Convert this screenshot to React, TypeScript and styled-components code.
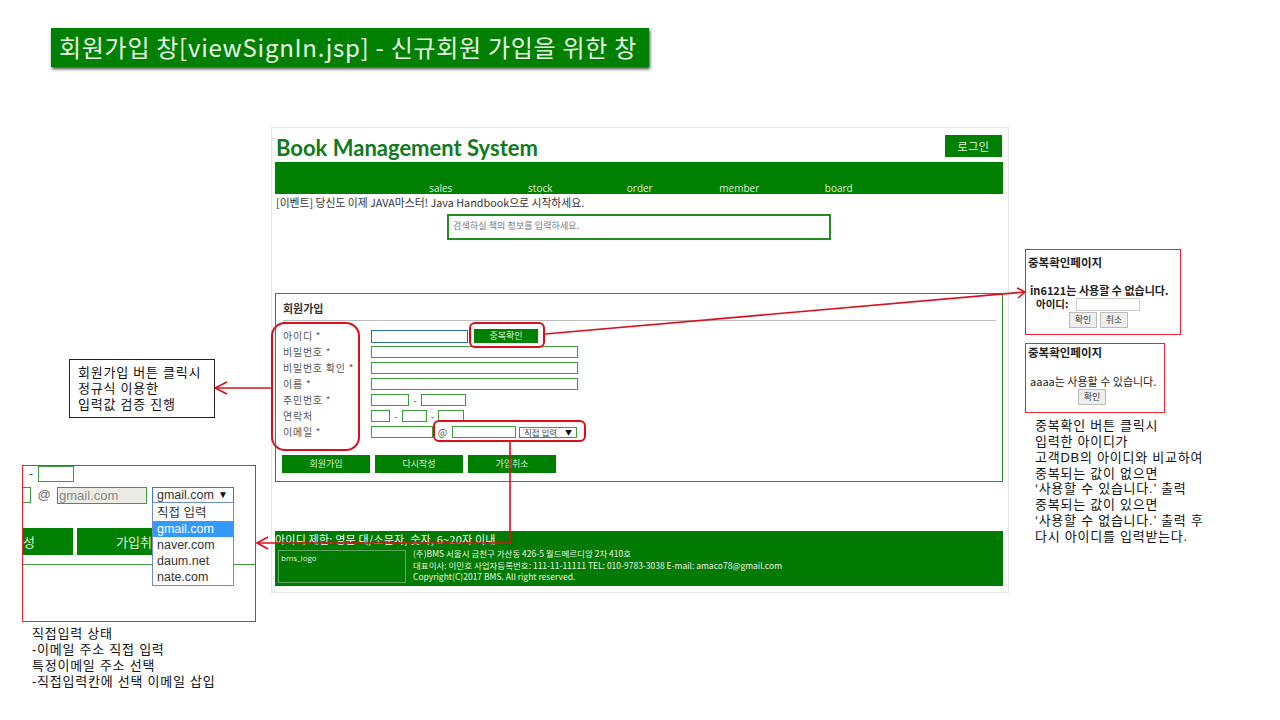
import styled, { createGlobalStyle } from "styled-components";

const KR = `"Noto Sans CJK KR", sans-serif`;
const SANS = `"Liberation Sans", "Noto Sans CJK KR", sans-serif`;
const OPEN = `"Open Sans", "Noto Sans CJK KR", sans-serif`;
const GREEN = "#008000";
const RED = "#d9101c";
const THIN_RED = "#ee2233";

const navItems = ["sales", "stock", "order", "member", "board"];
const labels = ["아이디 *", "비밀번호 *", "비밀번호 확인 *", "이름 *", "주민번호 *", "연락처", "이메일 *"];
const mailOptions = ["직접 입력", "gmail.com", "naver.com", "daum.net", "nate.com"];

function Arrow({ x, y, dx, dy }: { x: number; y: number; dx: number; dy: number }) {
  return <polyline points={`${x + dx},${y - dy} ${x},${y} ${x + dx},${y + dy}`} />;
}

export default function App() {
  return (
    <Slide>
      <Global />
      <Banner>회원가입 창[viewSignIn.jsp] - 신규회원 가입을 위한 창</Banner>

      <PageFrame>
        <Header>
          <Logo>Book Management System</Logo>
          <LoginButton>로그인</LoginButton>
        </Header>
        <Nav>
          {navItems.map((item) => (
            <NavItem key={item}>{item}</NavItem>
          ))}
        </Nav>
        <EventLine>[이벤트] 당신도 이제 JAVA마스터! Java Handbook으로 시작하세요.</EventLine>
        <SearchBox>검색하실 책의 정보를 입력하세요.</SearchBox>

        <FormPanel>
          <FormTitle>회원가입</FormTitle>
          <FormGrid>
            <Labels>
              {labels.map((label) => (
                <Label key={label}>{label}</Label>
              ))}
            </Labels>
            <Fields>
              <FieldRow>
                <Field $w={97} $focus />
                <CheckButton>중복확인</CheckButton>
              </FieldRow>
              <FieldRow>
                <Field $w={207} />
              </FieldRow>
              <FieldRow>
                <Field $w={207} />
              </FieldRow>
              <FieldRow>
                <Field $w={207} />
              </FieldRow>
              <FieldRow>
                <Field $w={38} />
                <Dash $w={12}>-</Dash>
                <Field $w={45} />
              </FieldRow>
              <FieldRow>
                <Field $w={19} />
                <Dash $w={12}>-</Dash>
                <Field $w={25} />
                <Dash $w={11}>-</Dash>
                <Field $w={26} />
              </FieldRow>
              <FieldRow>
                <Field $w={62} />
                <At>@</At>
                <Field $w={64} />
                <MiniSelect>
                  직접 입력<small>▼</small>
                </MiniSelect>
              </FieldRow>
            </Fields>
          </FormGrid>
          <ButtonRow>
            <FormButton>회원가입</FormButton>
            <FormButton>다시작성</FormButton>
            <FormButton>가입취소</FormButton>
          </ButtonRow>
        </FormPanel>

        <Footer>
          <FooterLogo>bms_logo</FooterLogo>
          <FooterText>
            <FooterLine>(주)BMS 서울시 금천구 가산동 426-5 월드메르디앙 2차 410호</FooterLine>
            <FooterLine>
              대표이사: 이민호 사업자등록번호: 111-11-11111 TEL: 010-9783-3038 E-mail: amaco78@gmail.com
            </FooterLine>
            <FooterLine>Copyright(C)2017 BMS. All right reserved.</FooterLine>
          </FooterText>
        </Footer>
      </PageFrame>

      <FooterNote>아이디 제한: 영문 대/소문자, 숫자, 6~20자 이내</FooterNote>

      <Callout $x={271} $y={322} $w={89} $h={129} $r={14} />
      <Callout $x={469} $y={322} $w={76} $h={26} $r={6} />
      <Callout $x={433} $y={420} $w={153} $h={22} $r={6} />

      <Wires viewBox="0 0 1280 720">
        <line x1="545" y1="334" x2="1025" y2="292" />
        <line x1="271" y1="388" x2="215" y2="388" />
        <polyline points="510,442 510,543 257,543" />
        <Arrow x={215} y={388} dx={12} dy={6} />
        <Arrow x={257} y={543} dx={11} dy={6} />
        <polyline points="1017,288 1025,292 1018,298" />
      </Wires>

      <RuleBox>
        회원가입 버튼 클릭시
        <br />
        정규식 이용한
        <br />
        입력값 검증 진행
      </RuleBox>

      <CropBox>
        <CropTop>
          <span>-</span>
          <CropInput $w={36} />
        </CropTop>
        <CropMail>
          <CropInput $w={10} />
          <CropAt>@</CropAt>
          <CropMailInput>gmail.com</CropMailInput>
          <CropSelect>
            gmail.com<small>▼</small>
          </CropSelect>
        </CropMail>
        <CropButtons>
          <CropButton $w={50} $align="left">
            성
          </CropButton>
          <CropButton $w={126} $align="center">
            가입취소
          </CropButton>
        </CropButtons>
        <CropRule />
        <Dropdown>
          {mailOptions.map((option, i) => (
            <DropdownItem key={option} $active={i === 1}>
              {option}
            </DropdownItem>
          ))}
        </Dropdown>
      </CropBox>

      <Note $x={32} $y={626}>
        직접입력 상태
        <br />
        -이메일 주소 직접 입력
        <br />
        특정이메일 주소 선택
        <br />
        -직접입력칸에 선택 이메일 삽입
      </Note>

      <PopupBox $x={1025} $y={249} $w={156} $h={86} $top={4}>
        <PopupTitle>중복확인페이지</PopupTitle>
        <PopupMessage $bold>in6121는 사용할 수 없습니다.</PopupMessage>
        <PopupIdRow>
          아이디:
          <PopupInput />
        </PopupIdRow>
        <PopupButtons $pad={43}>
          <PopupButton>확인</PopupButton>
          <PopupButton>취소</PopupButton>
        </PopupButtons>
      </PopupBox>

      <PopupBox $x={1025} $y={343} $w={140} $h={70} $top={0}>
        <PopupTitle>중복확인페이지</PopupTitle>
        <PopupMessage>aaaa는 사용할 수 있습니다.</PopupMessage>
        <PopupButtons $pad={52}>
          <PopupButton>확인</PopupButton>
        </PopupButtons>
      </PopupBox>

      <Note $x={1035} $y={418}>
        중복확인 버튼 클릭시
        <br />
        입력한 아이디가
        <br />
        고객DB의 아이디와 비교하여
        <br />
        중복되는 값이 없으면
        <br />
        ‘사용할 수 있습니다.’ 출력
        <br />
        중복되는 값이 있으면
        <br />
        ‘사용할 수 없습니다.’ 출력 후
        <br />
        다시 아이디를 입력받는다.
      </Note>
    </Slide>
  );
}

const Global = createGlobalStyle`
  html, body {
    margin: 0;
    background: #fff;
  }
`;

const Slide = styled.div`
  position: relative;
  width: 1280px;
  height: 720px;
  overflow: hidden;
  background: #fff;
  font-family: ${SANS};
`;

const Banner = styled.div`
  position: absolute;
  left: 51px;
  top: 28px;
  width: 598px;
  height: 39px;
  box-sizing: border-box;
  padding-left: 8px;
  background: ${GREEN};
  box-shadow: 1px 2px 3px #444;
  color: #eaf7e6;
  font: 400 24px/38px ${KR};
  letter-spacing: 0.72px;
  white-space: nowrap;
`;

const PageFrame = styled.div`
  position: absolute;
  left: 271px;
  top: 127px;
  width: 738px;
  height: 466px;
  box-sizing: border-box;
  display: flex;
  flex-direction: column;
  padding: 0 5px 0 3px;
  border: 1px solid #e6e6e6;
  font-family: ${OPEN};
`;

const Header = styled.header`
  display: flex;
  justify-content: space-between;
  align-items: flex-start;
  height: 34px;
`;

const Logo = styled.h1`
  margin: 5px 0 0 1px;
  color: #0f7a1e;
  font: 700 22px/30px Lato, ${OPEN};
`;

const LoginButton = styled.div`
  width: 57px;
  height: 22px;
  margin: 7px 1px 0 0;
  background: ${GREEN};
  color: #e8f5e4;
  font: 400 11px/22px ${KR};
  letter-spacing: 0.6px;
  text-align: center;
`;

const Nav = styled.nav`
  display: flex;
  align-items: flex-end;
  height: 32px;
  padding-left: 116px;
  background: ${GREEN};
`;

const NavItem = styled.span`
  width: 99.5px;
  color: #dff0da;
  font: 400 10px/11px ${OPEN};
  text-align: center;
`;

const EventLine = styled.div`
  height: 20px;
  padding-left: 1px;
  color: #333;
  font: 400 10.8px/17px ${KR};
  white-space: nowrap;
`;

const SearchBox = styled.div`
  align-self: center;
  width: 384px;
  height: 26px;
  box-sizing: border-box;
  padding-left: 4px;
  border: 2px solid #228b22;
  color: #777;
  font: 400 9px/20px ${KR};
  letter-spacing: 0.1px;
`;

const FormPanel = styled.section`
  height: 189px;
  box-sizing: border-box;
  margin-top: 53px;
  padding: 0 6px 0 7px;
  border: 1px solid #2e8b2e;
`;

const FormTitle = styled.h2`
  height: 27px;
  box-sizing: border-box;
  margin: 0;
  border-bottom: 1px solid #bbb;
  color: #333;
  font: 700 11px/29px ${KR};
`;

const FormGrid = styled.div`
  display: flex;
  padding-top: 7px;
`;

const Labels = styled.div`
  width: 88px;
`;

const Label = styled.div`
  height: 16px;
  color: #555;
  font: 400 10px/16px ${KR};
  letter-spacing: 0.75px;
  white-space: nowrap;
`;

const Fields = styled.div`
  display: flex;
  flex-direction: column;
`;

const FieldRow = styled.div`
  display: flex;
  align-items: center;
  height: 16px;
`;

const Field = styled.div<{ $w: number; $focus?: boolean }>`
  width: ${(p) => p.$w}px;
  height: ${(p) => (p.$focus ? 13 : 12)}px;
  box-sizing: border-box;
  border: 1px solid ${(p) => (p.$focus ? "#2a6f9e" : "#3f9a3f")};
`;

const CheckButton = styled.div`
  width: 64px;
  height: 14px;
  margin-left: 6px;
  background: ${GREEN};
  color: #dff0da;
  font: 400 9px/14px ${KR};
  text-align: center;
`;

const Dash = styled.span<{ $w: number }>`
  width: ${(p) => p.$w}px;
  color: #555;
  font: 400 10px/12px ${KR};
  text-align: center;
`;

const At = styled.span`
  width: 19px;
  color: #555;
  font: 400 10px/12px ${KR};
  text-align: center;
`;

const MiniSelect = styled.div`
  display: flex;
  justify-content: space-between;
  align-items: center;
  width: 58px;
  height: 11px;
  box-sizing: border-box;
  margin-left: 3px;
  padding: 0 4px;
  border: 1px solid #3f9a3f;
  color: #444;
  font: 400 8.5px/9px ${KR};
  small {
    font-size: 7px;
    color: #111;
  }
`;

const ButtonRow = styled.div`
  display: flex;
  gap: 5px;
  margin: 15px 0 0 -1px;
`;

const FormButton = styled.div`
  width: 88px;
  height: 18px;
  background: ${GREEN};
  color: #dff0da;
  font: 400 9px/18px ${KR};
  text-align: center;
`;

const Footer = styled.footer`
  display: flex;
  gap: 7px;
  height: 55px;
  box-sizing: border-box;
  margin-top: 49px;
  padding: 17px 0 0 3px;
  background: #007a00;
`;

const FooterLogo = styled.div`
  width: 128px;
  height: 33px;
  margin-top: 2px;
  box-sizing: border-box;
  padding: 2px;
  border: 1px solid #5da95d;
  color: #e2f1df;
  font: 400 8px/10px ${OPEN};
`;

const FooterText = styled.div`
  display: flex;
  flex-direction: column;
`;

const FooterLine = styled.div`
  height: 11.5px;
  color: #eaf6e7;
  font: 400 8.5px/11.5px ${KR};
  white-space: nowrap;
`;

const FooterNote = styled.div`
  position: absolute;
  left: 275px;
  top: 532px;
  color: #f4faf2;
  font: 400 11px/14px ${KR};
  letter-spacing: 0.2px;
  white-space: nowrap;
`;

const Callout = styled.div<{ $x: number; $y: number; $w: number; $h: number; $r: number }>`
  position: absolute;
  left: ${(p) => p.$x}px;
  top: ${(p) => p.$y}px;
  width: ${(p) => p.$w}px;
  height: ${(p) => p.$h}px;
  box-sizing: border-box;
  border: 2px solid ${RED};
  border-radius: ${(p) => p.$r}px;
`;

const Wires = styled.svg`
  position: absolute;
  inset: 0;
  width: 1280px;
  height: 720px;
  pointer-events: none;
  fill: none;
  stroke: ${RED};
  stroke-width: 1.6;
`;

const RuleBox = styled.div`
  position: absolute;
  left: 69px;
  top: 359px;
  width: 146px;
  height: 59px;
  box-sizing: border-box;
  padding: 5px 0 0 8px;
  border: 1px solid #222;
  color: #111;
  font: 400 13px/16px ${SANS};
  letter-spacing: 0.75px;
  white-space: nowrap;
`;

const CropBox = styled.div`
  position: absolute;
  left: 22px;
  top: 465px;
  width: 234px;
  height: 157px;
  box-sizing: border-box;
  overflow: hidden;
  border: 1px solid ${THIN_RED};
`;

const CropTop = styled.div`
  display: flex;
  gap: 5px;
  height: 16px;
  padding-left: 6px;
  color: #444;
  font: 400 12px/16px ${SANS};
`;

const CropInput = styled.div<{ $w: number }>`
  width: ${(p) => p.$w}px;
  height: 16px;
  box-sizing: border-box;
  border: 1px solid #3f9a3f;
`;

const CropMail = styled.div`
  display: flex;
  align-items: flex-start;
  height: 17px;
  margin-top: 5px;
  margin-left: -2px;
`;

const CropAt = styled.span`
  width: 26px;
  color: #666;
  font: 400 13px/15px ${SANS};
  text-align: center;
`;

const CropMailInput = styled.div`
  width: 90px;
  height: 17px;
  box-sizing: border-box;
  padding-left: 1px;
  border: 1px solid #3f9a3f;
  background: #ebebe4;
  color: #888;
  font: 400 13px/16px ${SANS};
`;

const CropSelect = styled.div`
  display: flex;
  justify-content: space-between;
  align-items: center;
  width: 82px;
  height: 16px;
  box-sizing: border-box;
  margin-left: 5px;
  padding: 0 5px 0 4px;
  border: 1px solid #3f7fa8;
  color: #333;
  font: 400 12.5px/14px ${SANS};
  small {
    font-size: 10px;
    color: #111;
  }
`;

const CropButtons = styled.div`
  display: flex;
  gap: 4px;
  margin-top: 24px;
`;

const CropButton = styled.div<{ $w: number; $align: string }>`
  width: ${(p) => p.$w}px;
  height: 27px;
  background: ${GREEN};
  color: #dff0da;
  font: 400 13px/27px ${KR};
  text-align: ${(p) => p.$align};
`;

const CropRule = styled.div`
  height: 1px;
  margin-top: 9px;
  background: #3f9a3f;
`;

const Dropdown = styled.ul`
  position: absolute;
  left: 129px;
  top: 36px;
  width: 82px;
  box-sizing: border-box;
  margin: 0;
  padding: 2px 0 0;
  border: 1px solid #6a8fc0;
  background: #fff;
  list-style: none;
`;

const DropdownItem = styled.li<{ $active: boolean }>`
  height: 16px;
  padding-left: 4px;
  background: ${(p) => (p.$active ? "#3399ff" : "#fff")};
  color: ${(p) => (p.$active ? "#fff" : "#333")};
  font: 400 12.5px/16px ${SANS};
  white-space: nowrap;
`;

const Note = styled.div<{ $x: number; $y: number }>`
  position: absolute;
  left: ${(p) => p.$x}px;
  top: ${(p) => p.$y}px;
  color: #111;
  font: 400 13px/15.85px ${SANS};
  letter-spacing: 0.75px;
  white-space: nowrap;
`;

const PopupBox = styled.div<{ $x: number; $y: number; $w: number; $h: number; $top: number }>`
  position: absolute;
  left: ${(p) => p.$x}px;
  top: ${(p) => p.$y}px;
  width: ${(p) => p.$w}px;
  height: ${(p) => p.$h}px;
  box-sizing: border-box;
  padding: ${(p) => p.$top}px 0 0 2px;
  border: 1px solid ${THIN_RED};
`;

const PopupTitle = styled.div`
  height: 24px;
  color: #222;
  font: 700 11.5px/16px ${KR};
  white-space: nowrap;
`;

const PopupMessage = styled.div<{ $bold?: boolean }>`
  height: 13px;
  margin: ${(p) => (p.$bold ? "6px" : "7px")} 0 0 2px;
  color: #222;
  font: ${(p) => (p.$bold ? 700 : 400)} 11px/12px ${KR};
  white-space: nowrap;
`;

const PopupIdRow = styled.div`
  display: flex;
  align-items: center;
  gap: 8px;
  height: 14px;
  padding-left: 8px;
  color: #222;
  font: 700 10.5px/14px ${KR};
`;

const PopupInput = styled.div`
  width: 64px;
  height: 13px;
  box-sizing: border-box;
  border: 1px solid #ccc;
`;

const PopupButtons = styled.div<{ $pad: number }>`
  display: flex;
  gap: 3px;
  padding: 1px 0 0 ${(p) => p.$pad - 2}px;
`;

const PopupButton = styled.div`
  width: 28px;
  height: 16px;
  box-sizing: border-box;
  border: 1px solid #bbb;
  background: #eee;
  color: #444;
  font: 400 9px/14px ${KR};
  text-align: center;
`;
